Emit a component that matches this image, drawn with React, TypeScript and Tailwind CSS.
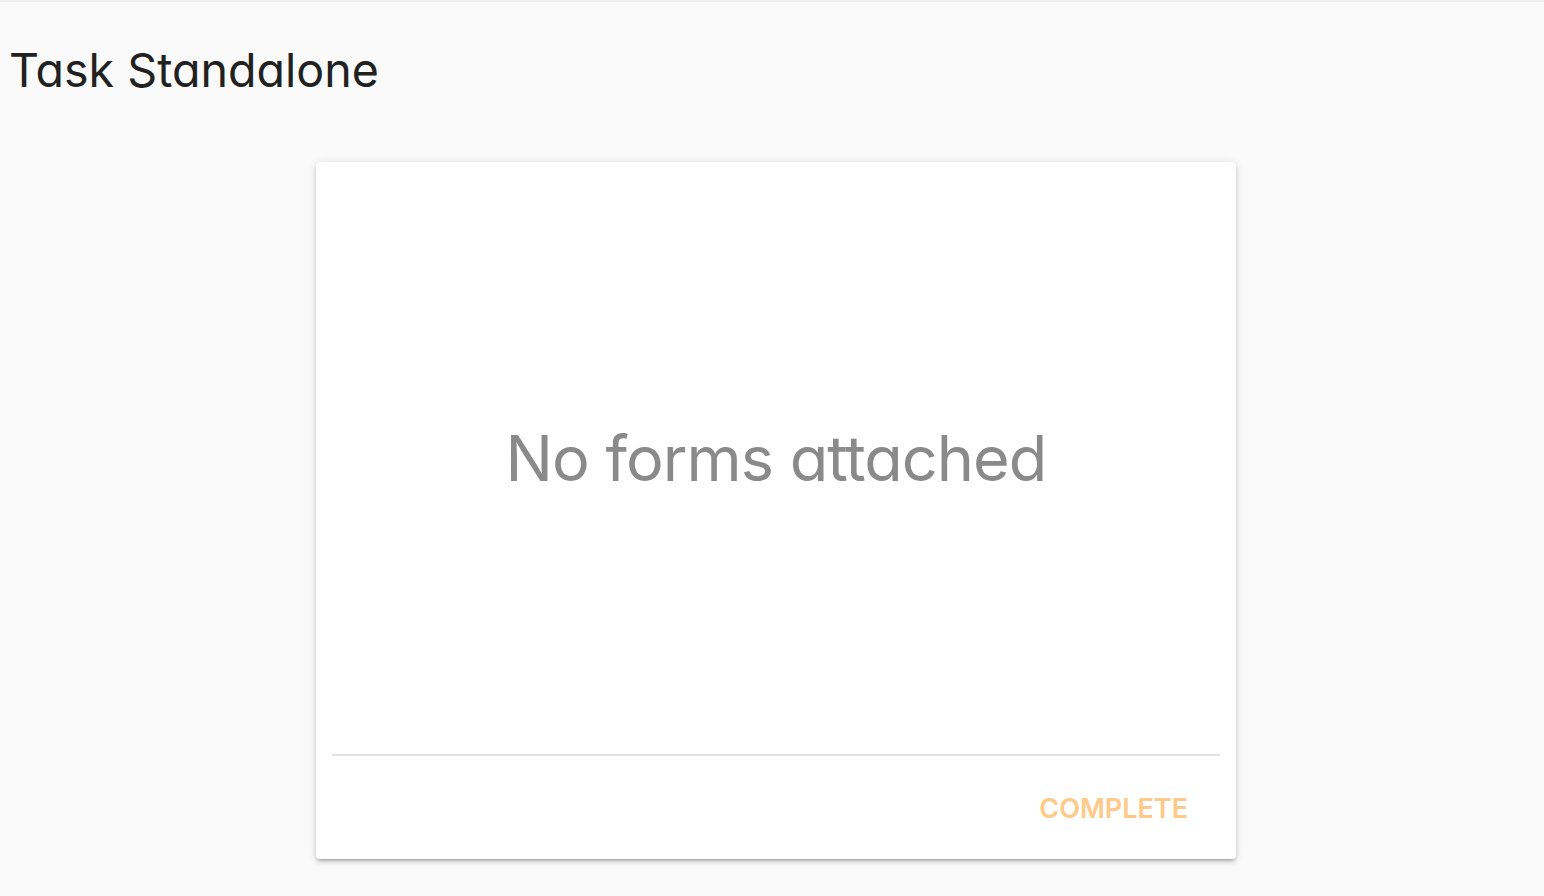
import React from 'react';

const font = "font-['Inter',sans-serif] [font-feature-settings:'cv11']";

const App: React.FC = () => {
  return (
    <div className={`min-h-[896px] bg-[#fafafa] border-t-2 border-[#eeeeee] ${font}`}>
      <h1 className="pl-[9px] pt-[37px] text-[46.6px] leading-[62px] text-[#212121] font-normal">
        Task Standalone
      </h1>
      <div className="flex justify-center pl-2 pt-[61px]">
        <div className="w-[920px] h-[697px] bg-white rounded flex flex-col px-4 shadow-[0_3px_3px_-2px_rgba(0,0,0,0.2),0_3px_4px_0_rgba(0,0,0,0.14),0_1px_8px_0_rgba(0,0,0,0.12)]">
          <div className="flex-1 flex items-center justify-center">
            <p className="text-[63px] text-[#8a8a8a] tracking-[-1px]">No forms attached</p>
          </div>
          <div className="border-t-2 border-[#e0e0e0] h-[105px] flex items-center justify-end pr-8">
            <button className="text-[27px] font-semibold text-[#ffc98a] uppercase pt-[3px]" disabled>
              Complete
            </button>
          </div>
        </div>
      </div>
    </div>
  );
};

export default App;
